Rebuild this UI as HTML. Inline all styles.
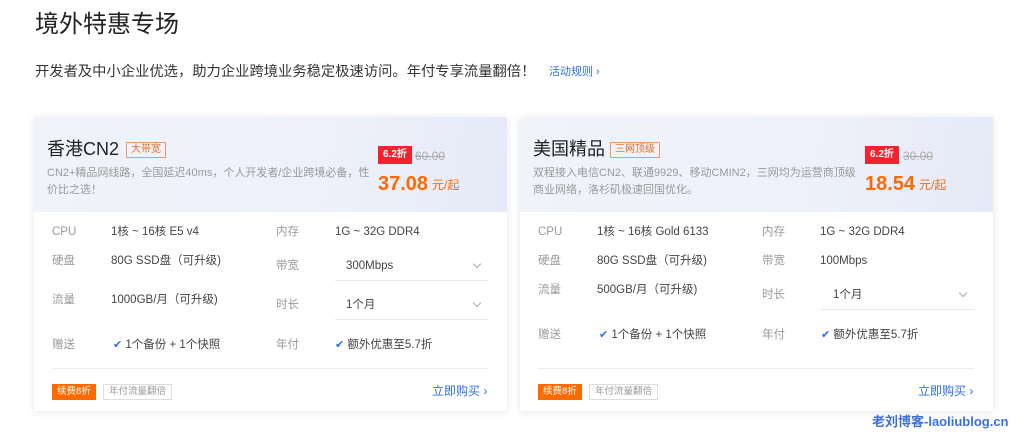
<!DOCTYPE html><html><head><meta charset="utf-8"><style>
*{margin:0;padding:0;box-sizing:border-box}
body{width:1024px;height:445px;background:#fff;font-family:"Liberation Sans","Noto Sans CJK SC",sans-serif;position:relative;overflow:hidden;color:#333}
.a{position:absolute;white-space:nowrap;line-height:1}
.card{position:absolute;top:117px;width:473px;height:294px;background:#fff;box-shadow:0 1px 8px rgba(0,0,0,.10)}
.hd{position:absolute;left:0;top:0;width:100%;height:95px;background:linear-gradient(100deg,#f1f3fa 0%,#eef1fa 60%,#e6eaf8 100%)}
.t{font-size:18px;color:#222}
.tag{font-size:10px;color:#e0702e;border:1px solid #e39a6f;padding:2px 4px}
.desc{font-size:11px;color:#999;line-height:17px;white-space:normal;width:330px}
.off{background:#f5222d;color:#fff;font-size:10px;padding:4px 5px;font-weight:bold}
.old{font-size:12px;color:#aaa;text-decoration:line-through}
.pr{font-size:20px;color:#ff6a00;font-weight:bold}
.un{font-size:12px;color:#ff6a00}
.l{font-size:11.5px;color:#999}
.v{font-size:11.5px;color:#444}
.ul{position:absolute;height:1px;background:#e8e8e8}
.chev{position:absolute;width:6px;height:6px;border-right:1px solid #aaa;border-bottom:1px solid #aaa;transform:rotate(45deg)}
.ck{color:#2f6fe4;font-size:11px}
.o8{background:#ff6a00;color:#fff;font-size:9.5px;padding:3px 5px}
.g{border:1px solid #ddd;color:#999;font-size:9.5px;padding:2px 5px}
.buy{font-size:12px;color:#2f6fe4}
</style></head><body>
<div class="a" style="left:35px;top:13px;font-size:24px;color:#222">境外特惠专场</div>
<div class="a" style="left:35px;top:65px;font-size:14.3px;color:#333">开发者及中小企业优选，助力企业跨境业务稳定极速访问。年付专享流量翻倍！</div>
<div class="a" style="left:549px;top:67px;font-size:11px;color:#2f6fe4">活动规则 ›</div>

<div class="card" style="left:34px">
<div class="hd"></div>
<div class="a t" style="left:13px;top:23px">香港CN2</div>
<div class="a tag" style="left:92px;top:25px">大带宽</div>
<div class="a desc" style="left:13px;top:48px">CN2+精品网线路，全国延迟40ms，个人开发者/企业跨境必备，性价比之选！</div>
<div class="a off" style="left:344px;top:29px">6.2折</div>
<div class="a old" style="left:381px;top:33px">60.00</div>
<div class="a pr" style="left:344px;top:57px">37.08</div>
<div class="a un" style="left:398px;top:62px">元/起</div>
<div class="a l" style="left:18px;top:110px">CPU</div><div class="a v" style="left:77px;top:110px">1核 ~ 16核 E5 v4</div>
<div class="a l" style="left:242px;top:110px">内存</div><div class="a v" style="left:301px;top:110px">1G ~ 32G DDR4</div>
<div class="a l" style="left:18px;top:139px">硬盘</div><div class="a v" style="left:77px;top:139px">80G SSD盘（可升级)</div>
<div class="a l" style="left:242px;top:144px">带宽</div><div class="a v" style="left:312px;top:144px">300Mbps</div>
<div class="ul" style="left:301px;top:163px;width:153px"></div><div class="chev" style="left:440px;top:144px"></div>
<div class="a l" style="left:18px;top:178px">流量</div><div class="a v" style="left:77px;top:178px">1000GB/月（可升级)</div>
<div class="a l" style="left:242px;top:183px">时长</div><div class="a v" style="left:312px;top:183px">1个月</div>
<div class="ul" style="left:301px;top:202px;width:153px"></div><div class="chev" style="left:440px;top:183px"></div>
<div class="a l" style="left:18px;top:223px">赠送</div><div class="a v" style="left:79px;top:223px"><span class="ck">✔</span> 1个备份 + 1个快照</div>
<div class="a l" style="left:242px;top:223px">年付</div><div class="a v" style="left:301px;top:223px"><span class="ck">✔</span> 额外优惠至5.7折</div>
<div class="ul" style="left:18px;top:251px;width:436px;background:#eceef3"></div>
<div class="a o8" style="left:18px;top:267px">续费8折</div>
<div class="a g" style="left:69px;top:267px">年付流量翻倍</div>
<div class="a buy" style="left:398px;top:268px">立即购买 ›</div>
</div>

<div class="card" style="left:520px">
<div class="hd"></div>
<div class="a t" style="left:13px;top:23px">美国精品</div>
<div class="a tag" style="left:90px;top:25px">三网顶级</div>
<div class="a desc" style="left:13px;top:48px">双程接入电信CN2、联通9929、移动CMIN2，三网均为运营商顶级商业网络，洛杉矶极速回国优化。</div>
<div class="a off" style="left:345px;top:29px">6.2折</div>
<div class="a old" style="left:383px;top:33px">30.00</div>
<div class="a pr" style="left:345px;top:57px">18.54</div>
<div class="a un" style="left:399px;top:62px">元/起</div>
<div class="a l" style="left:18px;top:110px">CPU</div><div class="a v" style="left:77px;top:110px">1核 ~ 16核 Gold 6133</div>
<div class="a l" style="left:242px;top:110px">内存</div><div class="a v" style="left:300px;top:110px">1G ~ 32G DDR4</div>
<div class="a l" style="left:18px;top:139px">硬盘</div><div class="a v" style="left:77px;top:139px">80G SSD盘（可升级)</div>
<div class="a l" style="left:242px;top:139px">带宽</div><div class="a v" style="left:300px;top:139px">100Mbps</div>
<div class="a l" style="left:18px;top:168px">流量</div><div class="a v" style="left:77px;top:168px">500GB/月（可升级)</div>
<div class="a l" style="left:242px;top:173px">时长</div><div class="a v" style="left:313px;top:173px">1个月</div>
<div class="ul" style="left:300px;top:192px;width:154px"></div><div class="chev" style="left:440px;top:173px"></div>
<div class="a l" style="left:18px;top:213px">赠送</div><div class="a v" style="left:79px;top:213px"><span class="ck">✔</span> 1个备份 + 1个快照</div>
<div class="a l" style="left:242px;top:213px">年付</div><div class="a v" style="left:301px;top:213px"><span class="ck">✔</span> 额外优惠至5.7折</div>
<div class="ul" style="left:18px;top:251px;width:436px;background:#eceef3"></div>
<div class="a o8" style="left:18px;top:267px">续费8折</div>
<div class="a g" style="left:69px;top:267px">年付流量翻倍</div>
<div class="a buy" style="left:398px;top:268px">立即购买 ›</div>
</div>

<div class="a" style="left:872px;top:415px;font-size:13px;font-weight:bold;color:#3b6fe0">老刘博客-laoliublog.cn</div>
</body></html>
